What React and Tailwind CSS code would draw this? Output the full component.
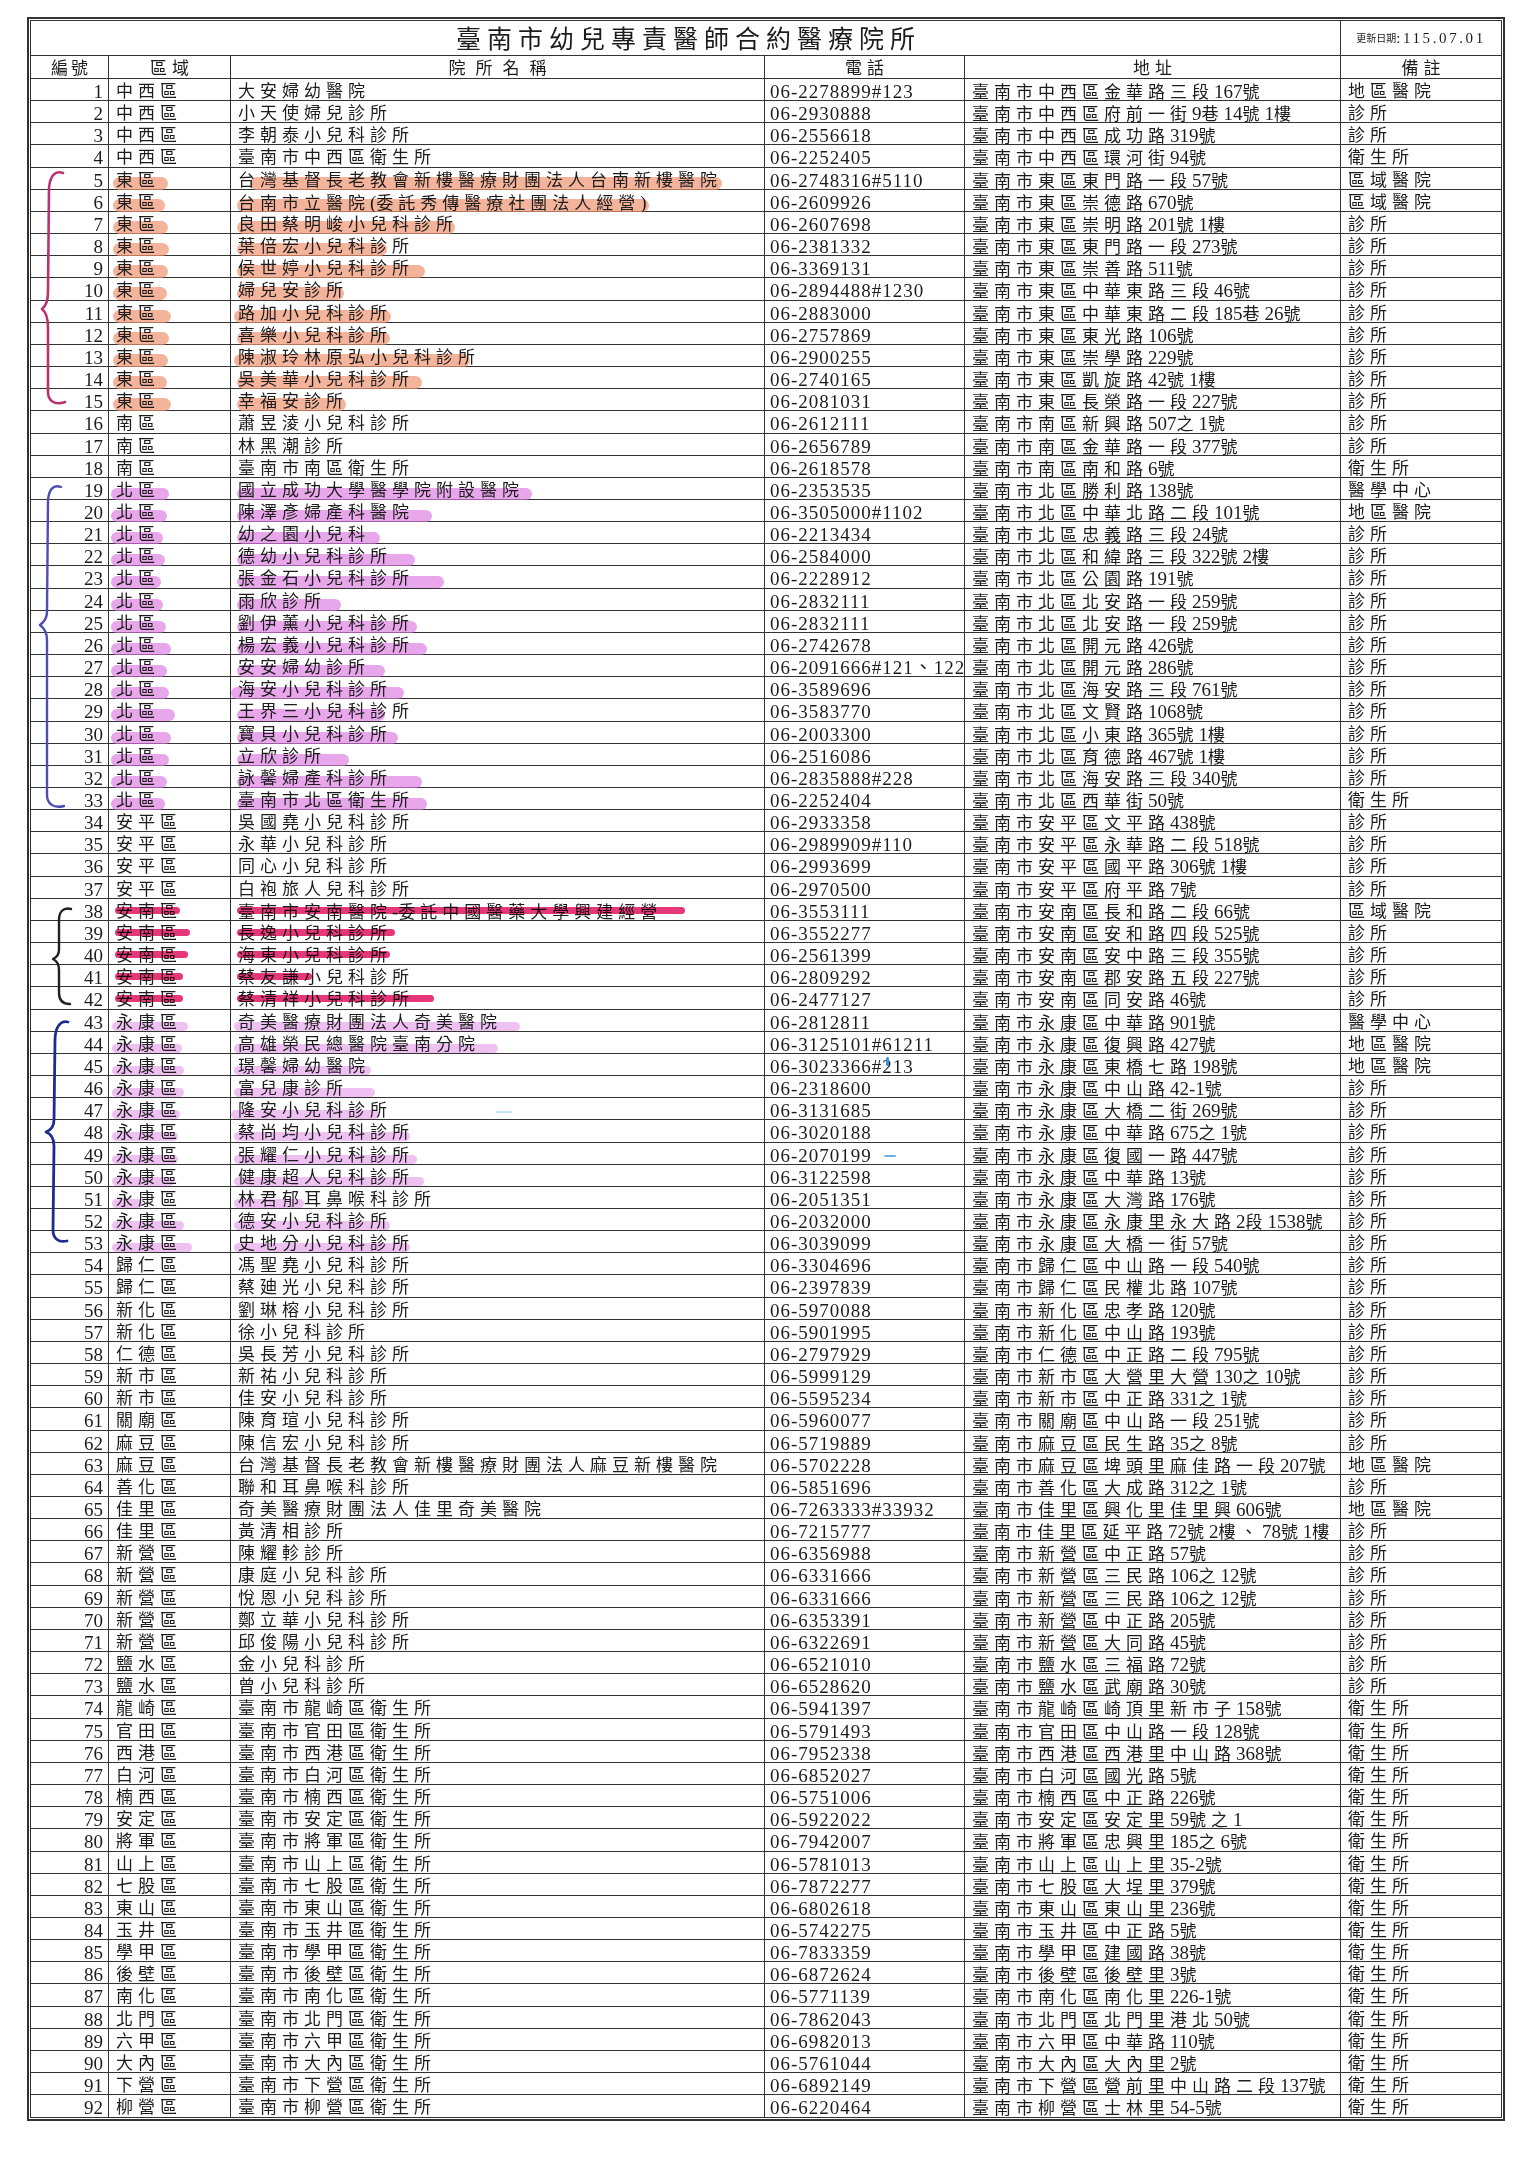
import React from 'react'

const rows = [
  '中西區|大安婦幼醫院|06-2278899#123|臺南市中西區金華路三段167號|地區醫院',
  '中西區|小天使婦兒診所|06-2930888|臺南市中西區府前一街9巷14號1樓|診所',
  '中西區|李朝泰小兒科診所|06-2556618|臺南市中西區成功路319號|診所',
  '中西區|臺南市中西區衛生所|06-2252405|臺南市中西區環河街94號|衛生所',
  '東區|台灣基督長老教會新樓醫療財團法人台南新樓醫院|06-2748316#5110|臺南市東區東門路一段57號|區域醫院',
  '東區|台南市立醫院(委託秀傳醫療社團法人經營)|06-2609926|臺南市東區崇德路670號|區域醫院',
  '東區|良田蔡明峻小兒科診所|06-2607698|臺南市東區崇明路201號1樓|診所',
  '東區|葉倍宏小兒科診所|06-2381332|臺南市東區東門路一段273號|診所',
  '東區|侯世婷小兒科診所|06-3369131|臺南市東區崇善路511號|診所',
  '東區|婦兒安診所|06-2894488#1230|臺南市東區中華東路三段46號|診所',
  '東區|路加小兒科診所|06-2883000|臺南市東區中華東路二段185巷26號|診所',
  '東區|喜樂小兒科診所|06-2757869|臺南市東區東光路106號|診所',
  '東區|陳淑玲林原弘小兒科診所|06-2900255|臺南市東區崇學路229號|診所',
  '東區|吳美華小兒科診所|06-2740165|臺南市東區凱旋路42號1樓|診所',
  '東區|幸福安診所|06-2081031|臺南市東區長榮路一段227號|診所',
  '南區|蕭昱淩小兒科診所|06-2612111|臺南市南區新興路507之1號|診所',
  '南區|林黑潮診所|06-2656789|臺南市南區金華路一段377號|診所',
  '南區|臺南市南區衛生所|06-2618578|臺南市南區南和路6號|衛生所',
  '北區|國立成功大學醫學院附設醫院|06-2353535|臺南市北區勝利路138號|醫學中心',
  '北區|陳澤彥婦產科醫院|06-3505000#1102|臺南市北區中華北路二段101號|地區醫院',
  '北區|幼之園小兒科|06-2213434|臺南市北區忠義路三段24號|診所',
  '北區|德幼小兒科診所|06-2584000|臺南市北區和緯路三段322號2樓|診所',
  '北區|張金石小兒科診所|06-2228912|臺南市北區公園路191號|診所',
  '北區|雨欣診所|06-2832111|臺南市北區北安路一段259號|診所',
  '北區|劉伊薰小兒科診所|06-2832111|臺南市北區北安路一段259號|診所',
  '北區|楊宏義小兒科診所|06-2742678|臺南市北區開元路426號|診所',
  '北區|安安婦幼診所|06-2091666#121、122|臺南市北區開元路286號|診所',
  '北區|海安小兒科診所|06-3589696|臺南市北區海安路三段761號|診所',
  '北區|王界三小兒科診所|06-3583770|臺南市北區文賢路1068號|診所',
  '北區|寶貝小兒科診所|06-2003300|臺南市北區小東路365號1樓|診所',
  '北區|立欣診所|06-2516086|臺南市北區育德路467號1樓|診所',
  '北區|詠馨婦產科診所|06-2835888#228|臺南市北區海安路三段340號|診所',
  '北區|臺南市北區衛生所|06-2252404|臺南市北區西華街50號|衛生所',
  '安平區|吳國堯小兒科診所|06-2933358|臺南市安平區文平路438號|診所',
  '安平區|永華小兒科診所|06-2989909#110|臺南市安平區永華路二段518號|診所',
  '安平區|同心小兒科診所|06-2993699|臺南市安平區國平路306號1樓|診所',
  '安平區|白袍旅人兒科診所|06-2970500|臺南市安平區府平路7號|診所',
  '安南區|臺南市安南醫院-委託中國醫藥大學興建經營|06-3553111|臺南市安南區長和路二段66號|區域醫院',
  '安南區|長逸小兒科診所|06-3552277|臺南市安南區安和路四段525號|診所',
  '安南區|海東小兒科診所|06-2561399|臺南市安南區安中路三段355號|診所',
  '安南區|蔡友謙小兒科診所|06-2809292|臺南市安南區郡安路五段227號|診所',
  '安南區|蔡清祥小兒科診所|06-2477127|臺南市安南區同安路46號|診所',
  '永康區|奇美醫療財團法人奇美醫院|06-2812811|臺南市永康區中華路901號|醫學中心',
  '永康區|高雄榮民總醫院臺南分院|06-3125101#61211|臺南市永康區復興路427號|地區醫院',
  '永康區|璟馨婦幼醫院|06-3023366#213|臺南市永康區東橋七路198號|地區醫院',
  '永康區|富兒康診所|06-2318600|臺南市永康區中山路42-1號|診所',
  '永康區|隆安小兒科診所|06-3131685|臺南市永康區大橋二街269號|診所',
  '永康區|蔡尚均小兒科診所|06-3020188|臺南市永康區中華路675之1號|診所',
  '永康區|張耀仁小兒科診所|06-2070199|臺南市永康區復國一路447號|診所',
  '永康區|健康超人兒科診所|06-3122598|臺南市永康區中華路13號|診所',
  '永康區|林君郁耳鼻喉科診所|06-2051351|臺南市永康區大灣路176號|診所',
  '永康區|德安小兒科診所|06-2032000|臺南市永康區永康里永大路2段1538號|診所',
  '永康區|史地分小兒科診所|06-3039099|臺南市永康區大橋一街57號|診所',
  '歸仁區|馮聖堯小兒科診所|06-3304696|臺南市歸仁區中山路一段540號|診所',
  '歸仁區|蔡廸光小兒科診所|06-2397839|臺南市歸仁區民權北路107號|診所',
  '新化區|劉琳榕小兒科診所|06-5970088|臺南市新化區忠孝路120號|診所',
  '新化區|徐小兒科診所|06-5901995|臺南市新化區中山路193號|診所',
  '仁德區|吳長芳小兒科診所|06-2797929|臺南市仁德區中正路二段795號|診所',
  '新市區|新祐小兒科診所|06-5999129|臺南市新市區大營里大營130之10號|診所',
  '新市區|佳安小兒科診所|06-5595234|臺南市新市區中正路331之1號|診所',
  '關廟區|陳育瑄小兒科診所|06-5960077|臺南市關廟區中山路一段251號|診所',
  '麻豆區|陳信宏小兒科診所|06-5719889|臺南市麻豆區民生路35之8號|診所',
  '麻豆區|台灣基督長老教會新樓醫療財團法人麻豆新樓醫院|06-5702228|臺南市麻豆區埤頭里麻佳路一段207號|地區醫院',
  '善化區|聯和耳鼻喉科診所|06-5851696|臺南市善化區大成路312之1號|診所',
  '佳里區|奇美醫療財團法人佳里奇美醫院|06-7263333#33932|臺南市佳里區興化里佳里興606號|地區醫院',
  '佳里區|黃清相診所|06-7215777|臺南市佳里區延平路72號2樓、78號1樓|診所',
  '新營區|陳耀軫診所|06-6356988|臺南市新營區中正路57號|診所',
  '新營區|康庭小兒科診所|06-6331666|臺南市新營區三民路106之12號|診所',
  '新營區|悅恩小兒科診所|06-6331666|臺南市新營區三民路106之12號|診所',
  '新營區|鄭立華小兒科診所|06-6353391|臺南市新營區中正路205號|診所',
  '新營區|邱俊陽小兒科診所|06-6322691|臺南市新營區大同路45號|診所',
  '鹽水區|金小兒科診所|06-6521010|臺南市鹽水區三福路72號|診所',
  '鹽水區|曾小兒科診所|06-6528620|臺南市鹽水區武廟路30號|診所',
  '龍崎區|臺南市龍崎區衛生所|06-5941397|臺南市龍崎區崎頂里新市子158號|衛生所',
  '官田區|臺南市官田區衛生所|06-5791493|臺南市官田區中山路一段128號|衛生所',
  '西港區|臺南市西港區衛生所|06-7952338|臺南市西港區西港里中山路368號|衛生所',
  '白河區|臺南市白河區衛生所|06-6852027|臺南市白河區國光路5號|衛生所',
  '楠西區|臺南市楠西區衛生所|06-5751006|臺南市楠西區中正路226號|衛生所',
  '安定區|臺南市安定區衛生所|06-5922022|臺南市安定區安定里59號之1|衛生所',
  '將軍區|臺南市將軍區衛生所|06-7942007|臺南市將軍區忠興里185之6號|衛生所',
  '山上區|臺南市山上區衛生所|06-5781013|臺南市山上區山上里35-2號|衛生所',
  '七股區|臺南市七股區衛生所|06-7872277|臺南市七股區大埕里379號|衛生所',
  '東山區|臺南市東山區衛生所|06-6802618|臺南市東山區東山里236號|衛生所',
  '玉井區|臺南市玉井區衛生所|06-5742275|臺南市玉井區中正路5號|衛生所',
  '學甲區|臺南市學甲區衛生所|06-7833359|臺南市學甲區建國路38號|衛生所',
  '後壁區|臺南市後壁區衛生所|06-6872624|臺南市後壁區後壁里3號|衛生所',
  '南化區|臺南市南化區衛生所|06-5771139|臺南市南化區南化里226-1號|衛生所',
  '北門區|臺南市北門區衛生所|06-7862043|臺南市北門區北門里港北50號|衛生所',
  '六甲區|臺南市六甲區衛生所|06-6982013|臺南市六甲區中華路110號|衛生所',
  '大內區|臺南市大內區衛生所|06-5761044|臺南市大內區大內里2號|衛生所',
  '下營區|臺南市下營區衛生所|06-6892149|臺南市下營區營前里中山路二段137號|衛生所',
  '柳營區|臺南市柳營區衛生所|06-6220464|臺南市柳營區士林里54-5號|衛生所',
]

// marker strokes drawn on the scan: [kind, area width, name left, name width]
const marks = {
  5: ['east', 55, 19, 472], 6: ['east', 52, 6, 412], 7: ['east', 55, 6, 218],
  8: ['east', 56, 6, 150], 9: ['east', 55, 6, 188], 10: ['east', 54, 6, 107],
  11: ['east', 58, 3, 157], 12: ['east', 56, 6, 153], 13: ['east', 55, 3, 236],
  14: ['east', 54, 6, 185], 15: ['east', 58, 6, 109],
  19: ['north', 58, 6, 295], 20: ['north', 56, 6, 195], 21: ['north', 52, 6, 143],
  22: ['north', 54, 6, 178], 23: ['north', 50, 6, 207], 24: ['north', 52, 6, 104],
  25: ['north', 55, 6, 180], 26: ['north', 60, 6, 190], 27: ['north', 56, 6, 148],
  28: ['north', 58, 0, 173], 29: ['north', 64, 6, 148], 30: ['north', 60, 6, 161],
  31: ['north', 58, 6, 112], 32: ['north', 56, 6, 185], 33: ['north', 54, 6, 190],
  38: ['annan', 65, 6, 448], 39: ['annan', 75, 6, 158], 40: ['annan', 73, 6, 153],
  41: ['annan', 68, 6, 75], 42: ['annan', 68, 6, 197],
  43: ['yong', 76, 3, 286], 44: ['yong', 70, 3, 264], 45: ['yong', 72, 3, 137],
  46: ['yong', 72, 3, 141], 47: ['yong', 68, 0, 148], 48: ['yong', 66, 3, 176],
  49: ['yong', 66, 3, 183], 50: ['yong', 62, 3, 190], 51: ['yong', 30, 3, 70],
  52: ['yong', 72, 3, 156], 53: ['yong', 80, 3, 176],
}

const markClass = {
  east: 'top-[9px] h-[13px] rounded-full bg-[#ef9470]/70',
  north: 'top-[10px] h-[12px] rounded-full bg-[#dc78e0]/65',
  annan: 'top-[8px] h-[7px] rounded-full bg-[#e2216a]/90 mix-blend-multiply z-20',
  yong: 'top-[12px] h-[9px] rounded-full bg-[#e6a0ec]/65',
}

const areaLeft = { east: 4, north: 2, annan: 6, yong: 3 }

const COLS = 'grid grid-cols-[78px_122px_534px_200px_376px_160px]'
const LINE = 'border-r border-[#333]'
const CELL = 'flex items-center pl-[7px] pt-[3px] text-[17px] tracking-[5px] leading-none whitespace-nowrap overflow-hidden'

const ASCII = /([0-9A-Za-z#().:\-]+)/

function Mixed({ text }) {
  return text.split(ASCII).map((p, i) =>
    p === '' ? null : i % 2 === 1
      ? <span key={i} className="text-[19px] tracking-[0px]">{p}</span>
      : <span key={i}>{p}</span>
  )
}

// long addresses were shrunk to fit their cell in the original sheet
function fitSpacing(text) {
  const parts = text.split(ASCII)
  let cjk = 0
  let asc = 0
  parts.forEach((p, i) => { if (i % 2) asc += p.length; else cjk += p.length })
  const natural = cjk * 22 + asc * 9.5
  if (natural <= 362) return undefined
  return { letterSpacing: `${5 - (natural - 362) / cjk}px` }
}

function Mark({ kind, left, width }) {
  return <span className={`absolute ${markClass[kind]}`} style={{ left, width }} />
}

function Row({ n, data }) {
  const [area, name, phone, addr, note] = data.split('|')
  const m = marks[n]
  return (
    <div className={`${COLS} h-[22.16px]`}>
      <div className={`${LINE} flex items-center justify-end pr-[5px] pt-[3px] text-[19px] leading-none`}>{n}</div>
      <div className={`${LINE} ${CELL} relative tracking-[3px]`}>
        {m && <Mark kind={m[0]} left={areaLeft[m[0]]} width={m[1]} />}
        <span className="relative z-10">{area}</span>
      </div>
      <div className={`${LINE} ${CELL} relative`}>
        {m && <Mark kind={m[0]} left={m[2]} width={m[3]} />}
        <span className="relative z-10"><Mixed text={name} /></span>
      </div>
      <div className={`${LINE} flex items-center pl-[5px] pt-[3px] text-[19px] tracking-[1px] leading-none whitespace-nowrap overflow-hidden`}>{phone}</div>
      <div className={`${LINE} ${CELL}`}>
        <span style={fitSpacing(addr)}><Mixed text={addr} /></span>
      </div>
      <div className={CELL}>{note}</div>
    </div>
  )
}

function Braces() {
  return (
    <svg className="absolute left-0 top-0 pointer-events-none" width="90" height="2160" viewBox="0 0 90 2160" fill="none" strokeLinecap="round" strokeLinejoin="round">
      <path d="M63 173 C55 170 50 176 49 188 L48 292 C48 301 46 306 42 309 C46 312 48 318 48 328 L48 392 C48 400 54 406 65 402" stroke="#b8336f" strokeWidth="2.6" />
      <path d="M61 487 C53 484 49 490 48 500 L47 612 C47 618 44 622 40 625 C44 628 47 632 47 640 L47 795 C47 803 53 809 64 806" stroke="#4d4db3" strokeWidth="2.4" />
      <path d="M71 909 C63 907 59 912 59 920 L59 950 C59 955 57 957 53 959 C57 961 59 964 59 970 L59 993 C59 1000 63 1004 70 1004" stroke="#222" strokeWidth="2.4" />
      <path d="M68 1022 C60 1020 55 1028 55 1040 L54 1120 C54 1126 51 1130 46 1132 C51 1134 54 1138 54 1146 L53 1230 C53 1238 58 1243 67 1241" stroke="#1d2c8f" strokeWidth="2.8" />
    </svg>
  )
}

export default function App() {
  return (
    <div className="relative w-[1528px] h-[2160px] bg-white text-[#1c1c1c] font-['Liberation_Serif','Noto_Sans_CJK_TC',serif] pt-[17px] pl-[27px]">
      <div className="w-[1478px] border-2 border-[#333] p-px">
        <div className="border border-[#333] flex flex-col divide-y divide-[#333]">
          <div className="grid grid-cols-[1310px_160px] h-[35px]">
            <div className={`${LINE} flex items-center justify-center pl-[6px] pt-[2px] text-[25px] tracking-[6px] leading-none`}>
              臺南市幼兒專責醫師合約醫療院所
            </div>
            <div className="flex items-center justify-center pt-[1px] leading-none">
              <span className="text-[10px]">更新日期</span>
              <span className="text-[15px] tracking-[2.6px]">:115.07.01</span>
            </div>
          </div>
          <div className={`${COLS} h-[23px] text-[17px] leading-none`}>
            <div className={`${LINE} flex items-center justify-center pl-[3px] pt-[3px] tracking-[3px]`}>編號</div>
            <div className={`${LINE} flex items-center justify-center pl-[5px] pt-[3px] tracking-[5px]`}>區域</div>
            <div className={`${LINE} flex items-center justify-center pl-[10px] pt-[3px] tracking-[10px]`}>院所名稱</div>
            <div className={`${LINE} flex items-center justify-center pl-[5px] pt-[3px] tracking-[5px]`}>電話</div>
            <div className={`${LINE} flex items-center justify-center pl-[5px] pt-[3px] tracking-[5px]`}>地址</div>
            <div className="flex items-center justify-center pl-[5px] pt-[3px] tracking-[5px]">備註</div>
          </div>
          {rows.map((r, i) => <Row key={i} n={i + 1} data={r} />)}
        </div>
      </div>
      <Braces />
      <span className="absolute left-[886px] top-[1057px] w-[3px] h-[9px] rounded-full bg-[#3b8fdb]" />
      <span className="absolute left-[884px] top-[1155px] w-[12px] h-[2px] rounded-full bg-[#4a9ae0]/80" />
      <span className="absolute left-[496px] top-[1111px] w-[16px] h-[2px] rounded-full bg-[#bfe2f3]" />
    </div>
  )
}
